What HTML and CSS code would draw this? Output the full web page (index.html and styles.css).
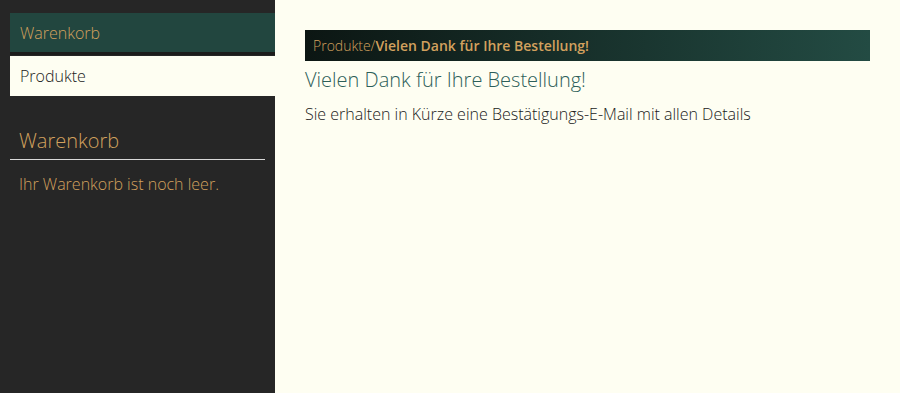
FILE: index.html
```html
<!DOCTYPE html>
<html lang="de">
<head>
    <meta charset="UTF-8">
    <meta name="viewport" content="width=device-width, initial-scale=1.0">
    <title>Bestellung abgeschlossen</title>
    <link rel="stylesheet" href="styles.css">
</head>
<body>

<div class="layout">
    <aside class="sidebar">
        <nav class="nav">
            <a class="nav-item active" href="#">Warenkorb</a>
            <a class="nav-item" href="#">Produkte</a>
        </nav>

        <div class="cart">
            <h2>Warenkorb</h2>
            <p>Ihr Warenkorb ist noch leer.</p>
        </div>
    </aside>

    <main class="content">
        <div class="breadcrumb">
            <span>Produkte/</span><strong>Vielen Dank für Ihre Bestellung!</strong>
        </div>
        <h1>Vielen Dank für Ihre Bestellung!</h1>
        <p>Sie erhalten in Kürze eine Bestätigungs-E-Mail mit allen Details</p>
    </main>
</div>

</body>
</html>
```

FILE: styles.css
```css
body {
    margin: 0;
    background-color: #fefef2;
    font-family: "Open Sans", Arial, sans-serif;
    font-weight: 300;
    height: 100vh;
}

.layout {
    display: flex;
    height: 100vh;
}

.sidebar {
    width: 275px;
    flex-shrink: 0;
    background-color: #262626;
    padding-top: 13px;
    box-sizing: border-box;
}

.nav {
    display: flex;
    flex-direction: column;
    padding-left: 10px;
}

.nav-item {
    display: block;
    height: 40px;
    line-height: 40px;
    padding-left: 10px;
    font-size: 16px;
    text-decoration: none;
    color: #1a1a1a;
    background-color: #fefef2;
}

.nav-item.active {
    height: 39px;
    background-color: #22463f;
    color: #d2a15e;
    margin-bottom: 4px;
    box-shadow: 0 3px 0 #1c1c1c;
}

.cart {
    padding: 31px 10px 0 10px;
}

.cart h2 {
    font-size: 20px;
    font-weight: 300;
    color: #d2a15e;
    margin: 0;
    padding: 0 0 5px 9px;
    border-bottom: 1px solid #d8d8d8;
}

.cart p {
    color: #d2a15e;
    font-size: 16px;
    margin: 13px 0 0 9px;
}

.content {
    flex: 1;
    padding: 30px 30px 0 30px;
}

.breadcrumb {
    height: 31px;
    line-height: 31px;
    padding-left: 8px;
    font-size: 14px;
    color: #d2a15e;
    background: linear-gradient(to right, #0c1613, #234b43);
}

.breadcrumb strong {
    font-weight: 600;
}

.content h1 {
    font-size: 20px;
    font-weight: 300;
    color: #2d5e59;
    margin: 5px 0 0 0;
}

.content p {
    font-size: 16px;
    color: #1a1a1a;
    margin: 10px 0 0 0;
}
```
